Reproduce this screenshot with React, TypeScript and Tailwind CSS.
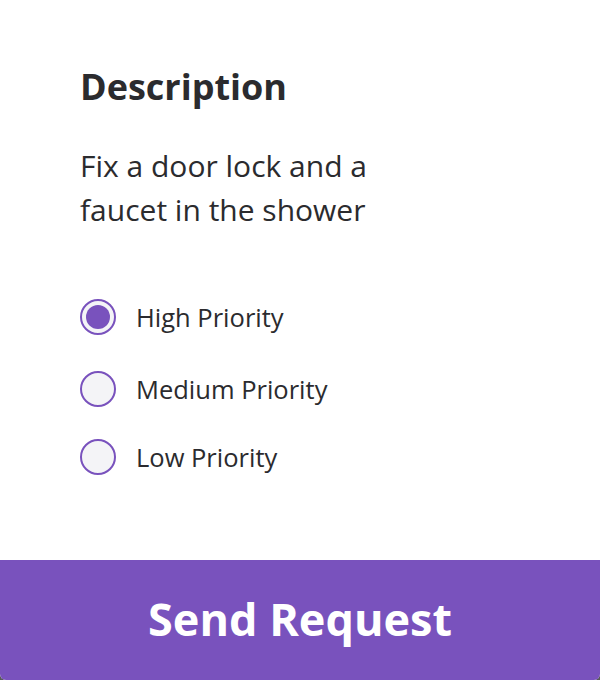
import React from "react";

const options = [
  { label: "High Priority", checked: true, mt: "mt-0" },
  { label: "Medium Priority", checked: false, mt: "mt-[36px]" },
  { label: "Low Priority", checked: false, mt: "mt-[32px]" },
];

export default function App() {
  return (
    <div className="w-[600px] h-[680px] bg-[#5a5a5a]">
      <div
        className="w-full h-full bg-white rounded-b-[6px] overflow-hidden flex flex-col text-[#2b2b2e]"
        style={{ fontFamily: "'Open Sans', sans-serif" }}
      >
        <div className="flex-1 pl-[80px] pt-[65px]">
          <h1 className="text-[36px] font-bold leading-[44px]">Description</h1>
          <p className="mt-[35px] text-[30px] leading-[44px]">
            Fix a door lock and a
            <br />
            faucet in the shower
          </p>
          <div className="mt-[67px] flex flex-col">
            {options.map((o) => (
              <div key={o.label} className={`flex items-center ${o.mt}`}>
                <div className="w-[36px] h-[36px] rounded-full border-2 border-[#7952bd] bg-[#f4f4f7] flex items-center justify-center">
                  {o.checked && <div className="w-[24px] h-[24px] rounded-full bg-[#7952bd]" />}
                </div>
                <span className="ml-[20px] text-[25.5px] leading-[36px]">{o.label}</span>
              </div>
            ))}
          </div>
        </div>
        <div className="h-[120px] bg-[#7952bd] flex items-center justify-center pb-[2px]">
          <span className="text-white text-[45px] font-bold">Send Request</span>
        </div>
      </div>
    </div>
  );
}
